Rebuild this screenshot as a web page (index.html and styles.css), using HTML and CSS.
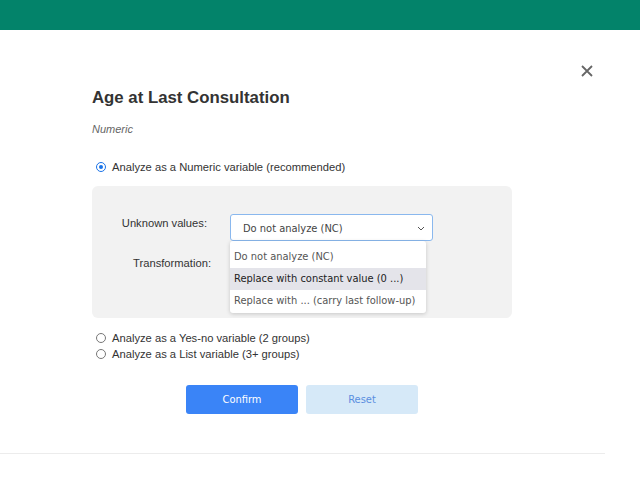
FILE: index.html
```html
<!DOCTYPE html>
<html>
<head>
<meta charset="utf-8">
<link rel="stylesheet" href="styles.css">
</head>
<body>
<div class="topbar"></div>
<div class="dialog">
  <button class="close" aria-label="Close">
    <svg width="12" height="12" viewBox="0 0 12 12"><path d="M1 1L11 11M11 1L1 11" stroke="#666" stroke-width="1.8" fill="none"/></svg>
  </button>
  <h1 class="title">Age at Last Consultation</h1>
  <div class="subtitle">Numeric</div>
  <div class="radio-row first"><span class="radio checked"></span><span>Analyze as a Numeric variable (recommended)</span></div>
  <div class="panel">
    <div class="field">
      <div class="label">Unknown values:</div>
      <div class="select-wrap">
        <div class="select"><span>Do not analyze (NC)</span>
          <svg class="chev" width="8" height="5" viewBox="0 0 8 5"><path d="M1 1L4 4L7 1" stroke="#555" stroke-width="1" fill="none"/></svg>
        </div>
        <ul class="menu">
          <li>Do not analyze (NC)</li>
          <li class="hover">Replace with constant value (0 ...)</li>
          <li>Replace with ... (carry last follow-up)</li>
        </ul>
      </div>
    </div>
    <div class="field second">
      <div class="label label2">Transformation:</div>
    </div>
  </div>
  <div class="radio-row"><span class="radio"></span><span>Analyze as a Yes-no variable (2 groups)</span></div>
  <div class="radio-row"><span class="radio"></span><span>Analyze as a List variable (3+ groups)</span></div>
  <div class="buttons">
    <button class="btn primary">Confirm</button>
    <button class="btn secondary">Reset</button>
  </div>
</div>
<div class="footer-line"></div>
</body>
</html>
```
FILE: styles.css
```css
html, body {
  margin: 0;
  padding: 0;
  background: #fff;
  font-family: "Liberation Sans", Arial, sans-serif;
  color: #333;
}
.topbar {
  height: 30px;
  background: #03836a;
}
.dialog {
  position: relative;
  width: 420px;
  padding: 58px 0 0 92px;
  height: 365px;
}
.close {
  position: absolute;
  left: 581px;
  top: 35px;
  width: 12px;
  height: 12px;
  padding: 0;
  border: 0;
  background: none;
  display: flex;
}
.title {
  margin: 0;
  font-size: 16.8px;
  line-height: 20px;
  font-weight: bold;
  color: #333;
}
.subtitle {
  margin-top: 14px;
  font-size: 11px;
  line-height: 14px;
  font-style: italic;
  color: #666;
}
.radio-row {
  display: flex;
  align-items: center;
  gap: 6px;
  padding-left: 4px;
  font-size: 11.2px;
  line-height: 16px;
  color: #333;
}
.radio-row.first {
  margin-top: 23px;
  margin-bottom: 11px;
}
.radio {
  width: 10px;
  height: 10px;
  box-sizing: border-box;
  border: 1px solid #777;
  border-radius: 50%;
  background: #fff;
  position: relative;
}
.radio.checked {
  border: 1.5px solid #1a73e8;
}
.radio.checked::after {
  content: "";
  position: absolute;
  left: 1.5px;
  top: 1.5px;
  width: 4px;
  height: 4px;
  border-radius: 50%;
  background: #1a73e8;
}
.panel {
  background: #f2f2f2;
  border-radius: 6px;
  height: 132px;
  box-sizing: border-box;
  padding-top: 28px;
  margin-bottom: 12px;
}
.field {
  display: flex;
  align-items: center;
  height: 27px;
}
.field.second {
  margin-top: 8px;
}
.label {
  width: 115px;
  text-align: right;
  font-size: 11.2px;
  color: #333;
  margin-right: 23px;
  position: relative;
  top: -5px;
}
.label2 {
  width: 119px;
  margin-right: 0;
  top: 0;
}
.select-wrap {
  position: relative;
}
.select {
  width: 203px;
  height: 27px;
  box-sizing: border-box;
  border: 1px solid #8ab8ee;
  border-radius: 3px;
  background: #fff;
  display: flex;
  align-items: center;
  justify-content: space-between;
  padding: 1px 7px 0 12px;
  font-family: "DejaVu Sans Condensed", "DejaVu Sans", Tahoma, sans-serif;
  font-stretch: condensed;
  font-size: 11px;
  color: #444;
}
.chev {
  display: block;
}
.menu {
  position: absolute;
  left: 0;
  top: 27px;
  width: 196px;
  margin: 0;
  padding: 5px 0 1px;
  list-style: none;
  background: #fff;
  border-radius: 3px;
  box-shadow: 0 1px 4px rgba(0,0,0,0.18);
  font-family: "DejaVu Sans Condensed", "DejaVu Sans", Tahoma, sans-serif;
  font-stretch: condensed;
  font-size: 11px;
  color: #555;
  z-index: 2;
}
.menu li {
  height: 22px;
  line-height: 22px;
  padding-left: 4px;
  white-space: nowrap;
}
.menu li.hover {
  background: #e4e4ea;
  color: #222;
}
.buttons {
  display: flex;
  justify-content: center;
  gap: 8px;
  margin-top: 23px;
}
.btn {
  width: 112px;
  height: 29px;
  border: 0;
  border-radius: 3px;
  font-family: "DejaVu Sans Condensed", "DejaVu Sans", Tahoma, sans-serif;
  font-stretch: condensed;
  font-size: 11px;
}
.primary {
  background: #3a84f7;
  color: #fff;
}
.secondary {
  background: #d6e9f8;
  color: #5b8fe0;
}
.footer-line {
  width: 605px;
  border-top: 1px solid #ececec;
}
```
